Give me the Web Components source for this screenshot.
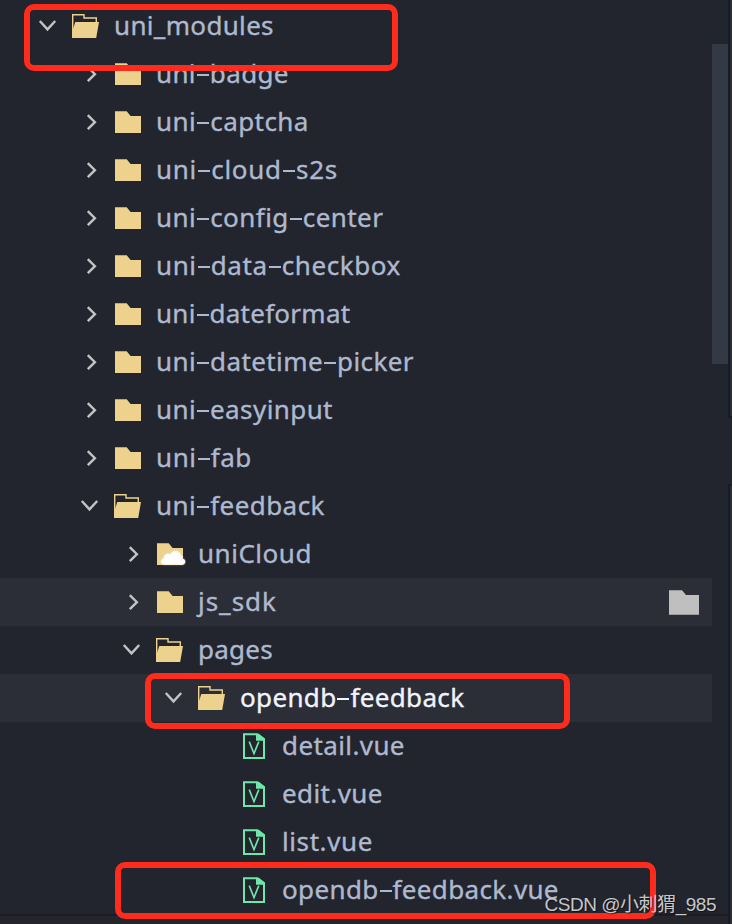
<!DOCTYPE html>
<html lang="zh">
<head>
<meta charset="utf-8">
<title>uni_modules</title>
<style>
html,body{margin:0;padding:0;background:#22252d}
body{width:732px;height:924px;overflow:hidden}
</style>
</head>
<body>
<file-explorer></file-explorer>
<script>
const CHEVRONS = {
  open: '<path d="M3.8 19L11.5 27.4L19.2 19"/>',
  closed: '<path d="M9.8 17.2L16.9 24.2L9.8 31.2"/>'
};
const FOLDER = '<path fill="#edd28e" d="M3 13.2H14.7L18.6 18H29V35H3Z"/>';
const ICONS = {
  folder: FOLDER,
  opened: '<path fill="none" stroke="#edd28e" stroke-width="1.4" d="M2.7 35V12.8H14V16H26.3V20"/><path fill="#edd28e" d="M5.3 20H29L26.2 36H2V30Z"/>',
  cloud: FOLDER + '<path fill="#fff" style="filter:drop-shadow(0 0 1px #fff8)" d="M10.5 34.6C6.2 34.6 5.8 29.4 9.8 28.4C9.6 24.6 14 22.8 16.5 24.4C18.5 19.4 26.1 20 26.8 25.6C29 26.2 28.8 28.2 28.7 28.8C32.6 29.6 32 34.6 28.1 34.6Z"/>',
  vue: '<g transform="translate(1 0)"><path fill="none" stroke="#71e6aa" stroke-width="2" d="M5 12.3H18.5L25 17.8V36H5Z"/><path fill="#71e6aa" d="M17 12H20L26 16.5V18.8H17Z"/><path fill="none" stroke="#71e6aa" stroke-width="1.6" d="M10.2 19.6L15 31.5L19.8 19.6"/></g>'
};

/* Spreads the letters of a label so that it takes up the given width. */
function fit(span, width) {
  const extra = width - span.getBoundingClientRect().width;
  span.style.letterSpacing = extra / [...span.textContent].length + 'px';
}

class FittedLabel extends HTMLElement {
  connectedCallback() {
    const root = this.attachShadow({mode: 'open'});
    root.innerHTML = `<style>
      :host{display:block;white-space:nowrap}
      .dash{color:transparent;-webkit-text-stroke:0;padding:0 2.6px;background:linear-gradient(var(--ink),var(--ink)) 50% 19px/12px 2px no-repeat}
    </style><span class="text"></span>`;
    const span = root.querySelector('span');
    span.innerHTML = this.getAttribute('text').replace(/-/g, '<span class="dash">-</span>');
    fit(span, +this.getAttribute('width'));
  }
}
customElements.define('fitted-label', FittedLabel);

class TreeRow extends HTMLElement {
  connectedCallback() {
    const a = n => this.getAttribute(n);
    const root = this.attachShadow({mode: 'open'});
    root.innerHTML = `<style>
      :host{--ink:#aeb9cf;display:flex;height:48px;width:712px;box-sizing:border-box;padding-left:${a('level') * 42 + 36}px;color:var(--ink);font:26px/46px "Noto Sans",sans-serif;-webkit-text-stroke:.35px}
      :host([lit]){background:#2c2e37}
      :host([current]){--ink:#f1f4fc}
      svg{flex:none;display:block}
      .twist{width:24px;margin-right:10px;fill:none;stroke:#c3c3c3;stroke-width:2.4}
      .icon{width:32px;margin-right:12px}
      .mark{width:32px;margin-left:auto;margin-right:12px}
      fitted-label{flex:none}
    </style>
    <svg class="twist" viewBox="0 0 24 48" height="48">${CHEVRONS[a('state')] || ''}</svg>
    <svg class="icon" viewBox="0 0 32 48" height="48">${ICONS[a('icon')]}</svg>
    <fitted-label text="${a('label')}" width="${a('end') - a('level') * 42 - 113.6}"></fitted-label>
    ${this.hasAttribute('marked') ? '<svg class="mark" viewBox="0 0 32 48" height="48"><path fill="#bfbfbf" d="M1 12.3H14L18 17H31V36.7H1Z"/></svg>' : ''}`;
  }
}
customElements.define('tree-row', TreeRow);

class HighlightBox extends HTMLElement {
  connectedCallback() {
    const [x, y, w, h] = this.getAttribute('rect').split(' ');
    this.attachShadow({mode: 'open'}).innerHTML = `<style>
      :host{position:absolute;left:${x}px;top:${y}px;width:${w}px;height:${h}px;box-sizing:border-box;border:6px solid #ff2b1c;border-radius:10px}
    </style>`;
  }
}
customElements.define('highlight-box', HighlightBox);

class PaneEdge extends HTMLElement {
  connectedCallback() {
    this.attachShadow({mode: 'open'}).innerHTML = `<style>
      :host{display:grid;grid-template-columns:16px 4px;height:924px}
      .track{padding-top:44px}
      .thumb{height:320px;background:#333a45}
      .side{display:flex;flex-direction:column;gap:66px}
      .side div{box-sizing:border-box;border-left:2px solid #1b1c22;background:#282d37}
      .a{height:418px;border-bottom:2px solid #1b1c22}
      .b{height:440px;border-top:2px solid #1b1c22}
    </style><div class="track"><div class="thumb"></div></div>
    <div class="side"><div class="a"></div><div class="b"></div></div>`;
  }
}
customElements.define('pane-edge', PaneEdge);

class WaterMark extends HTMLElement {
  connectedCallback() {
    this.attachShadow({mode: 'open'}).innerHTML = `<style>
      :host{position:absolute;left:544.5px;top:893px;color:#c6c7c9;font:19px/24px "Liberation Sans","Noto Sans CJK SC",sans-serif;text-shadow:1px 1px 1px #0008}
    </style><fitted-label text="CSDN @小刺猬_985" width="171.5"></fitted-label>`;
  }
}
customElements.define('water-mark', WaterMark);

const ROWS = [
  [0, 'open', 'opened', 'uni_modules', 273.5],
  [1, 'closed', 'folder', 'uni-badge', 288.5],
  [1, 'closed', 'folder', 'uni-captcha', 308.5],
  [1, 'closed', 'folder', 'uni-cloud-s2s', 337.5],
  [1, 'closed', 'folder', 'uni-config-center', 383],
  [1, 'closed', 'folder', 'uni-data-checkbox', 400.5],
  [1, 'closed', 'folder', 'uni-dateformat', 350],
  [1, 'closed', 'folder', 'uni-datetime-picker', 413.5],
  [1, 'closed', 'folder', 'uni-easyinput', 332.5],
  [1, 'closed', 'folder', 'uni-fab', 251.5],
  [1, 'open', 'opened', 'uni-feedback', 324.5],
  [2, 'closed', 'cloud', 'uniCloud', 311.5],
  [2, 'closed', 'folder', 'js_sdk', 276.5, 'lit marked'],
  [2, 'open', 'opened', 'pages', 272.5],
  [3, 'open', 'opened', 'opendb-feedback', 464, 'lit current'],
  [4, 'none', 'vue', 'detail.vue', 404.5],
  [4, 'none', 'vue', 'edit.vue', 382.5],
  [4, 'none', 'vue', 'list.vue', 372.5],
  [4, 'none', 'vue', 'opendb-feedback.vue', 558.5]
];

class FileExplorer extends HTMLElement {
  connectedCallback() {
    this.attachShadow({mode: 'open'}).innerHTML = `<style>
      :host{display:flex;position:relative;width:732px;height:924px;overflow:hidden;background:#22252d}
      .main{width:712px;flex:none;display:flex;flex-direction:column}
      .rows{padding-top:2px;position:relative}
      .foot{position:absolute;left:0;top:914px;width:728px;height:10px;box-sizing:border-box;border-top:2px solid #1c1d23;background:#24262c}
    </style>
    <div class="foot"></div>
    <div class="main"><div class="rows">${ROWS.map(([level, state, icon, label, end, flags = '']) =>
      `<tree-row level="${level}" state="${state}" icon="${icon}" label="${label}" end="${end}" ${flags}></tree-row>`).join('')}</div></div>
    <pane-edge></pane-edge>
    <highlight-box rect="24 4 374 67"></highlight-box>
    <highlight-box rect="145 673 425 56"></highlight-box>
    <highlight-box rect="115 862 541 57"></highlight-box>
    <water-mark></water-mark>`;
  }
}
customElements.define('file-explorer', FileExplorer);
</script>
</body>
</html>
